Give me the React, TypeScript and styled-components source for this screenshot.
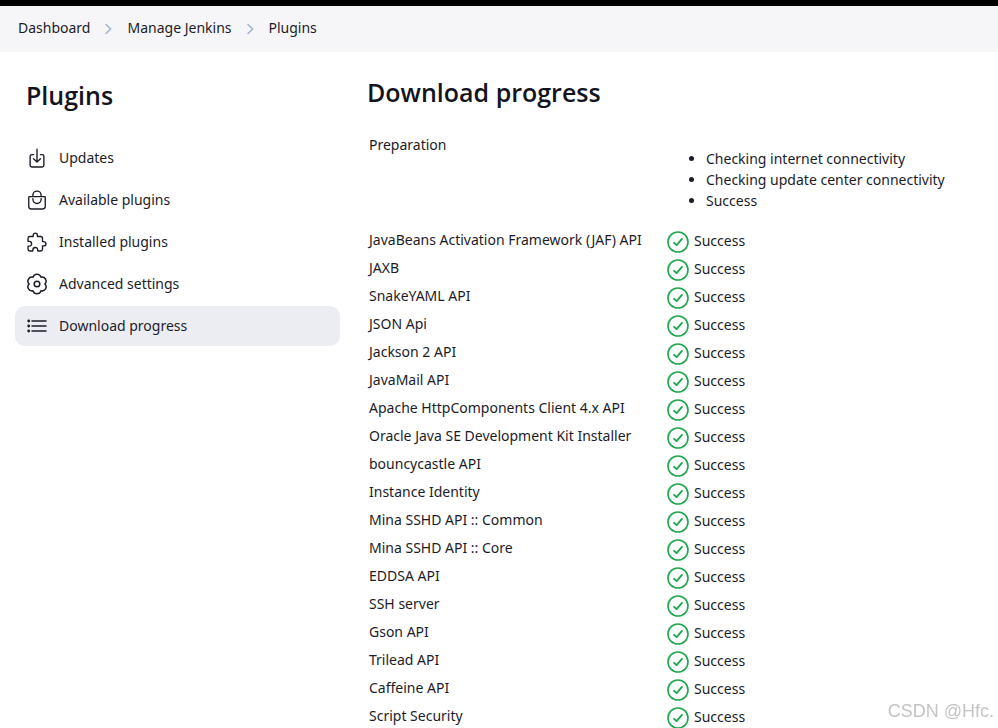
import React from "react";
import styled, { createGlobalStyle } from "styled-components";
import {
  IoBagHandleOutline,
  IoDownloadOutline,
  IoExtensionPuzzleOutline,
} from "react-icons/io5";

const GlobalStyle = createGlobalStyle`
  *, *::before, *::after { box-sizing: border-box; }
  html { scrollbar-width: none; }
  body {
    margin: 0;
    background: #ffffff;
    color: #1c1c28;
    font-family: "Noto Sans", "Open Sans", sans-serif;
    font-size: 14px;
    line-height: 21px;
  }
`;

const Page = styled.div`
  border-top: 6px solid #000000;
`;

const Breadcrumbs = styled.nav`
  display: flex;
  align-items: center;
  height: 46px;
  padding: 0 18px 3px;
  background: #f6f6f9;
`;

const CrumbList = styled.ol`
  display: flex;
  align-items: center;
  gap: 15px;
  margin: 0;
  padding: 0;
  list-style: none;
`;

const Crumb = styled.li`
  display: flex;
  align-items: center;
  gap: 15px;
`;

const CrumbLink = styled.a`
  color: inherit;
  text-decoration: none;
`;

const Chevron = styled.svg`
  width: 7px;
  height: 12px;
  margin-top: 2px;
  fill: none;
  stroke: #9fb3cc;
  stroke-width: 1.5;
  stroke-linecap: round;
  stroke-linejoin: round;
`;

const Body = styled.div`
  display: grid;
  grid-template-columns: 325px minmax(0, 1fr);
  gap: 27px;
  padding: 24px 15px 0;
`;

const Heading = styled.h1`
  margin: 0;
  color: #14141f;
  font-family: "Open Sans", "Noto Sans", sans-serif;
  font-size: 25px;
  line-height: 32px;
  font-weight: 600;
`;

const Sidebar = styled.aside`
  padding-top: 3px;
`;

const SidebarHeading = styled(Heading)`
  padding-left: 11px;
`;

const Tasks = styled.nav`
  display: flex;
  flex-direction: column;
  gap: 2px;
  margin-top: 27px;
`;

const Task = styled.a<{ $active?: boolean }>`
  display: flex;
  align-items: center;
  gap: 11px;
  height: 40px;
  padding: 0 11px;
  border-radius: 10px;
  color: inherit;
  text-decoration: none;
  background: ${(p) => (p.$active ? "#ecedf3" : "transparent")};

  svg {
    flex: none;
    width: 22px;
    height: 22px;
  }
`;

const TaskLabel = styled.span`
  padding-bottom: 2px;
`;

const Table = styled.table`
  margin-top: 24px;
  border-collapse: collapse;
`;

const NameCell = styled.td`
  height: 28px;
  min-width: 298px;
  width: 298px;
  padding: 2px;
  vertical-align: top;
  white-space: nowrap;
`;

const StatusCell = styled.td`
  padding: 0 2px;
  vertical-align: top;
  white-space: nowrap;
`;

const Steps = styled.ul`
  margin: 16px 0;
  padding: 0 0 0 39px;
  line-height: 21px;
`;

const Status = styled.div`
  display: flex;
  align-items: center;
  gap: 5px;
  height: 28px;
`;

const StatusLabel = styled.span`
  padding-bottom: 2px;
`;

const SuccessIcon = styled.svg`
  width: 22px;
  height: 22px;
  margin-top: 2px;
  fill: none;
  stroke: #1ea64b;
  stroke-linecap: round;
  stroke-linejoin: round;
`;

const Watermark = styled.div`
  position: fixed;
  right: 4px;
  bottom: 6px;
  color: #c4c4c6;
  font-family: "Liberation Sans", Arial, sans-serif;
  font-size: 18px;
  line-height: 22px;
`;

const gearOutline =
  Array.from({ length: 7 }, (_, i) => {
    const angle = (i * Math.PI) / 3;
    const x = (11 + 7.9 * Math.cos(angle)).toFixed(2);
    const y = (11 + 7.9 * Math.sin(angle)).toFixed(2);
    return i === 0 ? `M${x} ${y}` : `A4.1 4.1 0 0 1 ${x} ${y}`;
  }).join("") + "Z";

function GearIcon() {
  return (
    <svg viewBox="0 0 22 22" fill="none" stroke="currentColor" strokeWidth="1.5" aria-hidden="true">
      <path d={gearOutline} strokeLinejoin="round" />
      <circle cx="11" cy="11" r="2.8" />
    </svg>
  );
}

function ListIcon() {
  return (
    <svg viewBox="0 0 22 22" fill="currentColor" aria-hidden="true">
      <path d="M6 6h14M6 11h14M6 16h14" stroke="currentColor" strokeWidth="1.5" strokeLinecap="round" />
      <circle cx="2.7" cy="6" r="1.4" />
      <circle cx="2.7" cy="11" r="1.4" />
      <circle cx="2.7" cy="16" r="1.4" />
    </svg>
  );
}

const crumbs = ["Dashboard", "Manage Jenkins", "Plugins"];

const tasks = [
  { label: "Updates", Icon: IoDownloadOutline },
  { label: "Available plugins", Icon: IoBagHandleOutline },
  { label: "Installed plugins", Icon: IoExtensionPuzzleOutline },
  { label: "Advanced settings", Icon: GearIcon },
  { label: "Download progress", Icon: ListIcon, active: true },
];

const steps = [
  "Checking internet connectivity",
  "Checking update center connectivity",
  "Success",
];

const plugins = [
  "JavaBeans Activation Framework (JAF) API",
  "JAXB",
  "SnakeYAML API",
  "JSON Api",
  "Jackson 2 API",
  "JavaMail API",
  "Apache HttpComponents Client 4.x API",
  "Oracle Java SE Development Kit Installer",
  "bouncycastle API",
  "Instance Identity",
  "Mina SSHD API :: Common",
  "Mina SSHD API :: Core",
  "EDDSA API",
  "SSH server",
  "Gson API",
  "Trilead API",
  "Caffeine API",
  "Script Security",
];

export default function App() {
  return (
    <Page>
      <GlobalStyle />
      <Breadcrumbs aria-label="Breadcrumb">
        <CrumbList>
          {crumbs.map((crumb, i) => (
            <Crumb key={crumb}>
              {i > 0 && (
                <Chevron viewBox="0 0 7 12" aria-hidden="true">
                  <path d="M1 1.5 5.7 6 1 10.5" />
                </Chevron>
              )}
              <CrumbLink href="#">{crumb}</CrumbLink>
            </Crumb>
          ))}
        </CrumbList>
      </Breadcrumbs>
      <Body>
        <Sidebar>
          <SidebarHeading>Plugins</SidebarHeading>
          <Tasks aria-label="Plugins">
            {tasks.map(({ label, Icon, active }) => (
              <Task key={label} href="#" $active={active}>
                <Icon />
                <TaskLabel>{label}</TaskLabel>
              </Task>
            ))}
          </Tasks>
        </Sidebar>
        <main>
          <Heading>Download progress</Heading>
          <Table>
            <tbody>
              <tr>
                <NameCell>Preparation</NameCell>
                <StatusCell>
                  <Steps>
                    {steps.map((step) => (
                      <li key={step}>{step}</li>
                    ))}
                  </Steps>
                </StatusCell>
              </tr>
              {plugins.map((plugin) => (
                <tr key={plugin}>
                  <NameCell>{plugin}</NameCell>
                  <StatusCell>
                    <Status>
                      <SuccessIcon viewBox="0 0 22 22" aria-hidden="true">
                        <circle cx="11" cy="11" r="10" strokeWidth="1.6" />
                        <path d="M7 11.8 9.6 14.2 15 7.9" strokeWidth="1.8" />
                      </SuccessIcon>
                      <StatusLabel>Success</StatusLabel>
                    </Status>
                  </StatusCell>
                </tr>
              ))}
            </tbody>
          </Table>
        </main>
      </Body>
      <Watermark>CSDN @Hfc.</Watermark>
    </Page>
  );
}
